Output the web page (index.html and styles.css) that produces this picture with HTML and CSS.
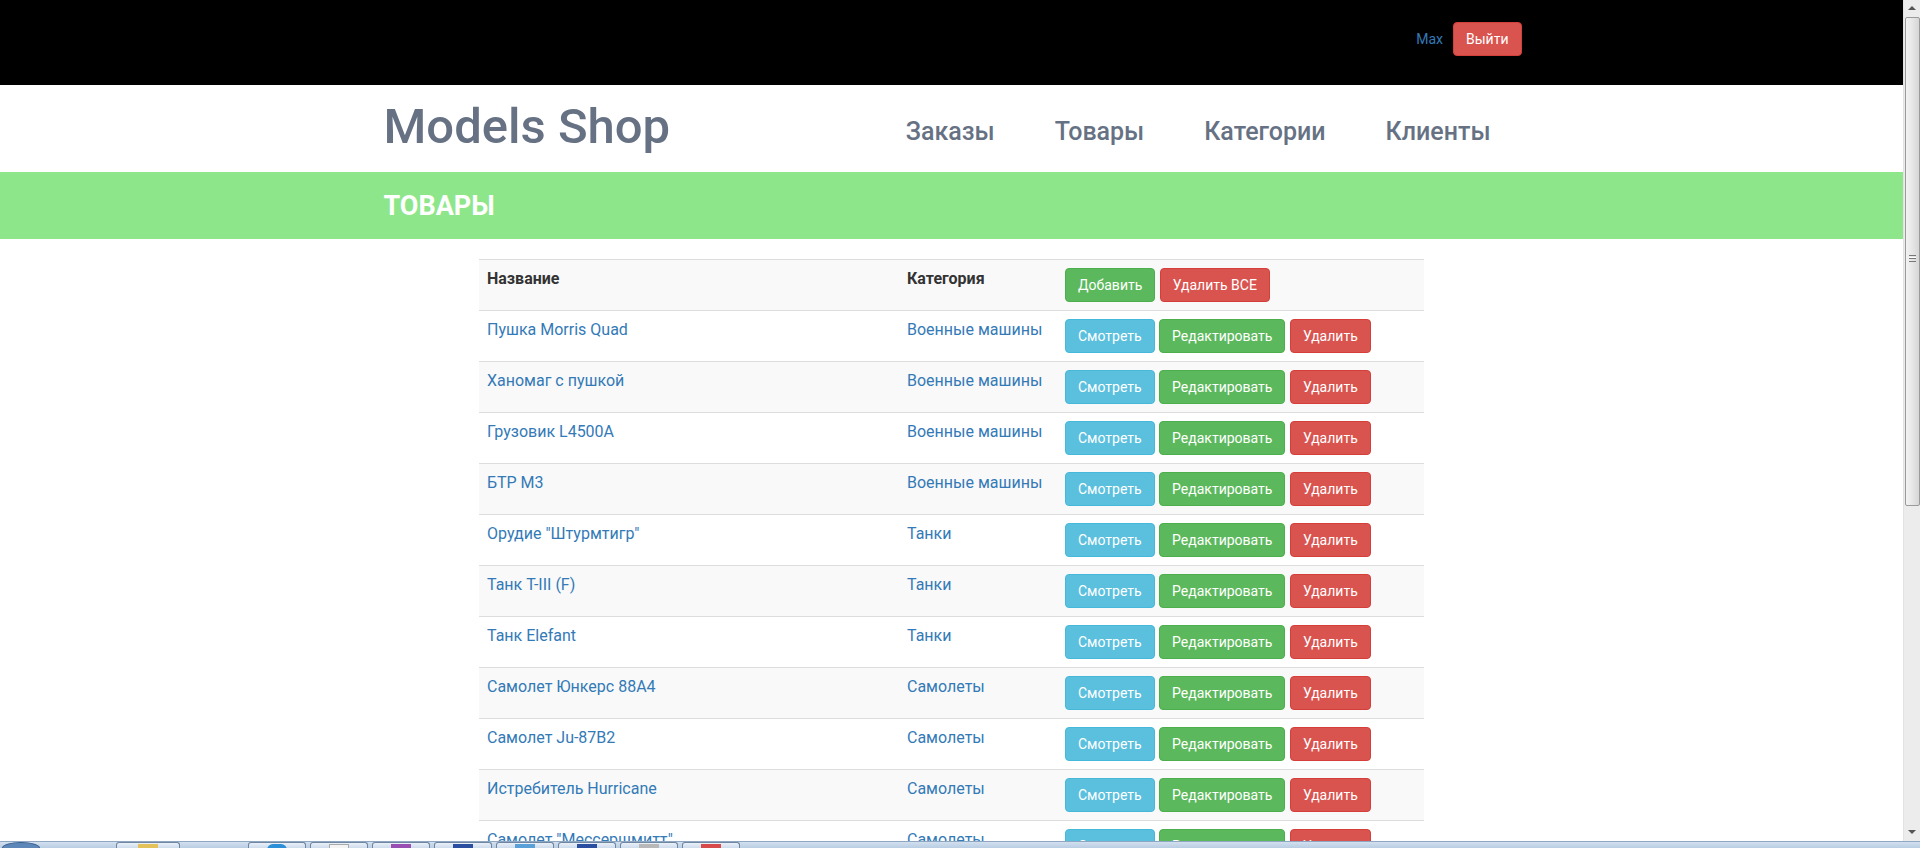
FILE: index.html
```html
<!DOCTYPE html>
<html lang="ru">
<head>
<meta charset="utf-8">
<title>Models Shop</title>
<link rel="stylesheet" href="styles.css">
</head>
<body>
<div class="page">
  <div class="topbar">
    <div class="container topbar-inner">
      <a class="user" href="#">Max</a>
      <a class="btn btn-danger" href="#">Выйти</a>
    </div>
  </div>
  <header class="header">
    <div class="container header-inner">
      <div class="brand">Models Shop</div>
      <nav class="nav">
        <a href="#">Заказы</a>
        <a href="#">Товары</a>
        <a href="#">Категории</a>
        <a href="#">Клиенты</a>
      </nav>
    </div>
  </header>
  <div class="banner">
    <div class="container"><h1 class="banner-title">ТОВАРЫ</h1></div>
  </div>
  <div class="container">
    <div class="table-wrap">
      <table class="table">
        <colgroup><col class="c1"><col class="c2"><col class="c3"></colgroup>
        <tbody>
          <tr>
            <th>Название</th>
            <th>Категория</th>
            <td><div class="btns"><a class="btn btn-success" href="#">Добавить</a><a class="btn btn-danger" href="#">Удалить ВСЕ</a></div></td>
          </tr>
          <tr><td><a href="#">Пушка Morris Quad</a></td><td><a href="#">Военные машины</a></td><td><div class="btns"><a class="btn btn-info" href="#">Смотреть</a><a class="btn btn-success" href="#">Редактировать</a><a class="btn btn-danger" href="#">Удалить</a></div></td></tr>
          <tr><td><a href="#">Ханомаг с пушкой</a></td><td><a href="#">Военные машины</a></td><td><div class="btns"><a class="btn btn-info" href="#">Смотреть</a><a class="btn btn-success" href="#">Редактировать</a><a class="btn btn-danger" href="#">Удалить</a></div></td></tr>
          <tr><td><a href="#">Грузовик L4500A</a></td><td><a href="#">Военные машины</a></td><td><div class="btns"><a class="btn btn-info" href="#">Смотреть</a><a class="btn btn-success" href="#">Редактировать</a><a class="btn btn-danger" href="#">Удалить</a></div></td></tr>
          <tr><td><a href="#">БТР М3</a></td><td><a href="#">Военные машины</a></td><td><div class="btns"><a class="btn btn-info" href="#">Смотреть</a><a class="btn btn-success" href="#">Редактировать</a><a class="btn btn-danger" href="#">Удалить</a></div></td></tr>
          <tr><td><a href="#">Орудие "Штурмтигр"</a></td><td><a href="#">Танки</a></td><td><div class="btns"><a class="btn btn-info" href="#">Смотреть</a><a class="btn btn-success" href="#">Редактировать</a><a class="btn btn-danger" href="#">Удалить</a></div></td></tr>
          <tr><td><a href="#">Танк T-III (F)</a></td><td><a href="#">Танки</a></td><td><div class="btns"><a class="btn btn-info" href="#">Смотреть</a><a class="btn btn-success" href="#">Редактировать</a><a class="btn btn-danger" href="#">Удалить</a></div></td></tr>
          <tr><td><a href="#">Танк Elefant</a></td><td><a href="#">Танки</a></td><td><div class="btns"><a class="btn btn-info" href="#">Смотреть</a><a class="btn btn-success" href="#">Редактировать</a><a class="btn btn-danger" href="#">Удалить</a></div></td></tr>
          <tr><td><a href="#">Самолет Юнкерс 88А4</a></td><td><a href="#">Самолеты</a></td><td><div class="btns"><a class="btn btn-info" href="#">Смотреть</a><a class="btn btn-success" href="#">Редактировать</a><a class="btn btn-danger" href="#">Удалить</a></div></td></tr>
          <tr><td><a href="#">Самолет Ju-87B2</a></td><td><a href="#">Самолеты</a></td><td><div class="btns"><a class="btn btn-info" href="#">Смотреть</a><a class="btn btn-success" href="#">Редактировать</a><a class="btn btn-danger" href="#">Удалить</a></div></td></tr>
          <tr><td><a href="#">Истребитель Hurricane</a></td><td><a href="#">Самолеты</a></td><td><div class="btns"><a class="btn btn-info" href="#">Смотреть</a><a class="btn btn-success" href="#">Редактировать</a><a class="btn btn-danger" href="#">Удалить</a></div></td></tr>
          <tr><td><a href="#">Самолет "Мессершмитт"</a></td><td><a href="#">Самолеты</a></td><td><div class="btns"><a class="btn btn-info" href="#">Смотреть</a><a class="btn btn-success" href="#">Редактировать</a><a class="btn btn-danger" href="#">Удалить</a></div></td></tr>
        </tbody>
      </table>
    </div>
  </div>
</div>

<div class="scrollbar">
  <div class="sb-arrow sb-up"></div>
  <div class="sb-thumb"><div class="sb-grip"></div></div>
  <div class="sb-arrow sb-down"></div>
</div>

<div class="taskbar">
  <div class="tb-start"></div>
  <div class="tb-item w1"><span class="ico yellow"></span></div>
  <div class="tb-gap"></div>
  <div class="tb-item"><span class="ico blue round"></span></div>
  <div class="tb-item"><span class="ico white"></span></div>
  <div class="tb-item"><span class="ico purple"></span></div>
  <div class="tb-item"><span class="ico navy"></span></div>
  <div class="tb-item"><span class="ico lblue"></span></div>
  <div class="tb-item"><span class="ico navy"></span></div>
  <div class="tb-item"><span class="ico gray"></span></div>
  <div class="tb-item"><span class="ico red"></span></div>
</div>
</body>
</html>
```

FILE: styles.css
```css
html, body {
  margin: 0;
  padding: 0;
  height: 100%;
  overflow: hidden;
}
body {
  font-family: Roboto, "Noto Sans", "Liberation Sans", sans-serif;
  font-size: 14px;
  line-height: 20px;
  color: #333;
  background: #fff;
}
a { text-decoration: none; color: #337ab7; }

.page {
  width: 1903px;
}
.container {
  width: 1140px;
  margin: 0 auto;
}

/* top black bar */
.topbar {
  background: #000;
  height: 85px;
}
.topbar-inner {
  display: flex;
  justify-content: flex-end;
  align-items: baseline;
  gap: 10px;
  padding-top: 22px;
}
.user {
  color: #337ab7;
  font-size: 14px;
}

/* header */
.header {
  height: 87px;
  background: #fff;
}
.header-inner {
  height: 87px;
  display: flex;
  align-items: center;
  justify-content: space-between;
}
.brand {
  font-size: 49px;
  font-weight: 500;
  line-height: 1;
  color: #667284;
  margin-left: 2px;
  margin-bottom: 5px;
}
.nav {
  display: flex;
  margin-top: 7px;
}
.nav a {
  font-size: 25px;
  font-weight: 500;
  line-height: 30px;
  color: #667284;
  padding: 0 30px;
}
.nav a:last-child { padding-right: 31px; }

/* banner */
.banner {
  background: #8de68a;
  height: 67px;
  display: flex;
  align-items: center;
}
.banner-title {
  margin: 0 0 0 2px;
  font-size: 27px;
  line-height: 30px;
  font-weight: 700;
  color: #fff;
}

/* table */
.table-wrap {
  margin: 20px 0 0 97.5px;
  width: 945px;
}
.table {
  width: 945px;
  border-collapse: collapse;
  table-layout: fixed;
}
.c1 { width: 420px; }
.c2 { width: 158px; }
.table th, .table td {
  padding: 8px;
  border-top: 1px solid #ddd;
  text-align: left;
  vertical-align: top;
  font-size: 16px;
  line-height: 22.86px;
}
.table th { font-weight: 700; color: #333; }
.table tbody tr:nth-child(odd) { background: #f9f9f9; }

.btns {
  display: flex;
  gap: 4px;
}
.btn {
  display: inline-block;
  padding: 6px 12px;
  font-size: 14px;
  line-height: 20px;
  border: 1px solid transparent;
  border-radius: 4px;
  color: #fff;
  white-space: nowrap;
}
.btns .btn + .btn { margin-left: 0.5px; }
.btn-danger { background: #d9534f; border-color: #d43f3a; }
.btn-success { background: #5cb85c; border-color: #4cae4c; }
.btn-info { background: #5bc0de; border-color: #46b8da; }

/* fake window scrollbar */
.scrollbar {
  position: fixed;
  top: 0;
  right: 0;
  width: 17px;
  height: 841px;
  background: #ececec;
  border-left: 1px solid #e2e2e2;
  box-sizing: border-box;
  display: flex;
  flex-direction: column;
  align-items: center;
}
.sb-arrow {
  width: 0;
  height: 0;
  border-left: 4px solid transparent;
  border-right: 4px solid transparent;
}
.sb-up {
  border-bottom: 4px solid #555;
  margin: 6px 0 7px;
}
.sb-down {
  border-top: 4px solid #555;
  margin-top: auto;
  margin-bottom: 7px;
}
.sb-thumb {
  width: 15px;
  height: 489px;
  box-sizing: border-box;
  border: 1px solid #9a9a9a;
  border-radius: 2px;
  background: linear-gradient(to right, #f3f3f3, #e6e6e6 50%, #d6d6d6);
  display: flex;
  align-items: center;
  justify-content: center;
}
.sb-grip {
  width: 7px;
  height: 5px;
  border-top: 1px solid #777;
  border-bottom: 1px solid #777;
  background: linear-gradient(#fff 0 1px, #777 1px 2px, transparent 2px);
  background-position: 0 1px;
  background-repeat: no-repeat;
  margin-bottom: 6px;
}

/* fake OS taskbar */
.taskbar {
  position: fixed;
  left: 0;
  bottom: 0;
  width: 1920px;
  height: 7px;
  background: linear-gradient(#d2e0ef, #b9cde3);
  border-top: 1px solid #8fa7c3;
  box-sizing: border-box;
  display: flex;
  align-items: flex-start;
  padding-left: 2px;
  gap: 4px;
}
.tb-start {
  width: 38px;
  height: 12px;
  border-radius: 50%;
  background: #5d87b8;
  border: 1px solid #385f8c;
  box-sizing: border-box;
}
.tb-item {
  width: 58px;
  height: 7px;
  border: 1px solid #6f86a3;
  border-bottom: none;
  border-radius: 3px 3px 0 0;
  background: linear-gradient(#e9f0f8, #c9d8ea);
  box-sizing: border-box;
  display: flex;
  justify-content: center;
}
.tb-item.w1 { width: 64px; margin-left: 72px; }
.tb-gap { width: 60px; }
.ico { width: 20px; height: 6px; margin-top: 1px; }
.ico.round { border-radius: 10px 10px 0 0; }
.yellow { background: #e3c25a; }
.blue { background: #2d8fd8; }
.white { background: #f4f4f4; border: 1px solid #aaa; box-sizing: border-box; }
.purple { background: #9a4fb3; }
.navy { background: #2a4ea0; }
.lblue { background: #5aa0d8; }
.gray { background: #b8b8b8; }
.red { background: #d84a4a; }
```
